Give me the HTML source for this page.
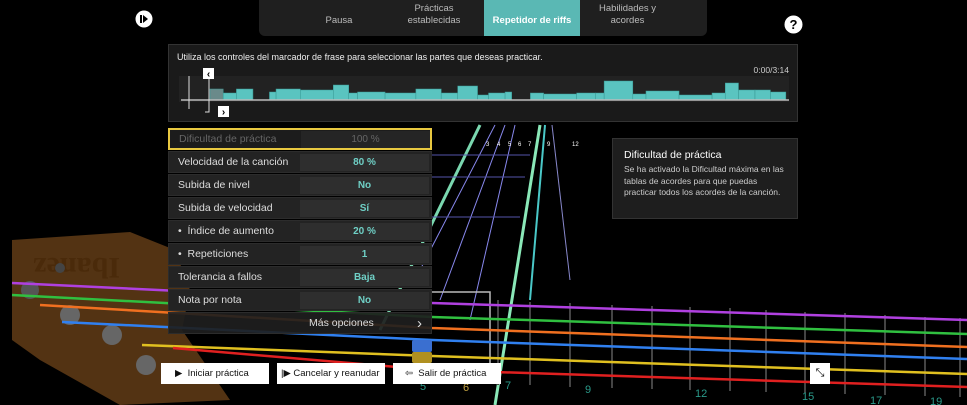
<!DOCTYPE html>
<html><head><meta charset="utf-8"><style>
*{margin:0;padding:0;box-sizing:border-box}
body{width:967px;height:405px;background:#000;overflow:hidden;position:relative;font-family:"Liberation Sans",sans-serif;color:#ddd}
.abs{position:absolute}
.tabs{left:259px;top:0;width:448px;height:36px;background:#1f1f1f;border-radius:0 0 6px 6px}
.tab{position:absolute;top:0;height:36px;font-size:9.5px;color:#bbb;text-align:center;display:flex;align-items:flex-end;justify-content:center;padding-bottom:9px;line-height:12px}
.panel{left:168px;top:44px;width:630px;height:78px;background:#1a1a1a;border:1px solid #333}
.row{position:absolute;left:168px;width:264px;height:22px;background:#232323;border:1px solid #2c2c2c}
.row .l{position:absolute;left:9px;top:0;line-height:21px;font-size:10.5px;color:#ddd}
.row .v{position:absolute;left:131px;top:2px;width:129px;height:17px;background:#2e2e2e;font-size:10px;color:#6fd0c6;text-align:center;line-height:17px;font-weight:bold}
.btn{position:absolute;top:363px;height:21px;background:#fff;color:#111;font-size:9.5px;line-height:21px;padding-left:14px}
</style></head><body>
<svg class="abs" style="left:0;top:0" width="967" height="405">
<!-- headstock -->
<path d="M12 240 L130 232 L175 250 L190 290 L182 330 L230 400 L120 405 L40 360 L12 340 Z" fill="#8a5520" opacity="0.6"/>
<text x="20" y="278" fill="#4a2a0a" font-family="Liberation Serif" font-size="30" font-weight="bold" transform="rotate(180 70 268)">Ibanez</text>
<circle cx="30" cy="290" r="9" fill="#555"/><circle cx="70" cy="315" r="10" fill="#666"/><circle cx="112" cy="335" r="10" fill="#666"/><circle cx="146" cy="365" r="10" fill="#666"/><circle cx="60" cy="268" r="5" fill="#444"/>
<!-- highway -->
<g stroke-width="1">
<line x1="480" y1="125" x2="380" y2="330" stroke="#7ad8b0" stroke-width="3"/>
<line x1="540" y1="125" x2="495" y2="405" stroke="#8ae8b8" stroke-width="3"/>
<line x1="545" y1="125" x2="530" y2="300" stroke="#4ac8c8" stroke-width="2"/>
<line x1="495" y1="125" x2="420" y2="270" stroke="#8888ee"/>
<line x1="505" y1="125" x2="440" y2="300" stroke="#8888ee"/>
<line x1="515" y1="125" x2="470" y2="320" stroke="#8888ee"/>
<line x1="552" y1="125" x2="570" y2="280" stroke="#8888cc"/>
<line x1="432" y1="155" x2="530" y2="155" stroke="#5555aa"/>
<line x1="432" y1="177" x2="525" y2="177" stroke="#5555aa"/>
<line x1="432" y1="217" x2="520" y2="217" stroke="#5555aa"/>
</g>
<g fill="#fff" font-size="6"><text x="486" y="146">3</text><text x="497" y="146">4</text><text x="508" y="146">5</text><text x="518" y="146">6</text><text x="528" y="146">7</text><text x="547" y="146">9</text><text x="572" y="146">12</text></g>
<!-- frets -->
<g stroke="#444" stroke-width="2">
<line x1="498" y1="300" x2="498" y2="385"/><line x1="530" y1="302" x2="530" y2="385"/><line x1="570" y1="303" x2="570" y2="387"/><line x1="612" y1="305" x2="612" y2="388"/><line x1="652" y1="306" x2="652" y2="389"/><line x1="690" y1="307" x2="690" y2="390"/><line x1="730" y1="308" x2="730" y2="391"/><line x1="766" y1="310" x2="766" y2="392"/><line x1="805" y1="312" x2="805" y2="393"/><line x1="845" y1="313" x2="845" y2="394"/><line x1="885" y1="315" x2="885" y2="395"/><line x1="925" y1="317" x2="925" y2="396"/><line x1="960" y1="318" x2="960" y2="397"/>
</g>
<polyline points="415,292 490,292 490,380" fill="none" stroke="#bbb" stroke-width="1.5"/>
<g stroke-width="2.5" fill="none">
<polyline points="12,283 432,303 967,320" stroke="#b040e0"/>
<polyline points="12,295 432,317 967,334" stroke="#30c040"/>
<polyline points="40,305 432,328 967,347" stroke="#f07020"/>
<polyline points="62,322 432,340 967,359" stroke="#3080f0"/>
<polyline points="142,345 432,356 967,374" stroke="#e0c020"/>
<polyline points="173,348 432,370 967,387" stroke="#e02020"/>
</g>
<rect x="412" y="340" width="20" height="12" fill="#3a6fd0" rx="2"/><rect x="412" y="352" width="20" height="11" fill="#b09020" rx="2"/>
<g font-size="11" fill="#2a9a8a"><text x="420" y="390">5</text><text x="463" y="391" fill="#c0a040">6</text><text x="505" y="389">7</text><text x="585" y="393">9</text><text x="695" y="397">12</text><text x="802" y="400">15</text><text x="870" y="404">17</text><text x="930" y="405">19</text></g>
</svg>

<div class="abs tabs">
<div class="tab" style="left:40px;width:80px">Pausa</div>
<div class="tab" style="left:125px;width:100px">Prácticas<br>establecidas</div>
<div class="tab" style="left:225px;width:96px;background:#5ab8b4;color:#fff;font-weight:bold">Repetidor de riffs</div>
<div class="tab" style="left:321px;width:95px">Habilidades y<br>acordes</div>
</div>
<svg class="abs" style="left:135px;top:10px" width="18" height="18"><circle cx="9" cy="9" r="8.5" fill="#fff"/><rect x="5" y="5" width="2" height="8" fill="#000"/><path d="M8 5 L13 9 L8 13Z" fill="#000"/></svg>
<svg class="abs" style="left:784px;top:15px" width="19" height="19"><circle cx="9.5" cy="9.5" r="9" fill="#fff"/><text x="9.5" y="14" text-anchor="middle" font-size="13" font-weight="bold" fill="#000" font-family="Liberation Sans">?</text></svg>

<div class="abs panel">
<div class="abs" style="left:8px;top:7px;font-size:9px;color:#eee">Utiliza los controles del marcador de frase para seleccionar las partes que deseas practicar.</div>
<div class="abs" style="right:8px;top:20px;font-size:8.5px;color:#ccc">0:00/3:14</div>
<div class="abs" style="left:10px;top:31px;width:610px;height:26px;background:#222"></div>
<svg class="abs" style="left:0;top:0" width="630" height="78">
<g transform="translate(41,-4) scale(1.101,1) translate(-19,0)">
<g fill="#5ac4c0" stroke="#3a9a96" stroke-width="0.5">
<rect x="19" y="48" width="12" height="11" fill="#6a8a8a"/><rect x="31" y="52" width="12" height="7"/><rect x="43" y="48" width="15" height="11"/><rect x="73" y="51" width="6" height="8"/><rect x="79" y="48" width="22" height="11"/><rect x="101" y="49" width="30" height="10"/><rect x="131" y="44" width="14" height="15"/><rect x="145" y="52" width="8" height="7"/><rect x="153" y="51" width="25" height="8"/><rect x="178" y="52" width="28" height="7"/><rect x="206" y="48" width="23" height="11"/><rect x="229" y="52" width="15" height="7"/><rect x="244" y="45" width="18" height="14"/><rect x="262" y="54" width="10" height="5"/><rect x="272" y="52" width="15" height="7"/><rect x="287" y="51" width="6" height="8"/><rect x="310" y="52" width="12" height="7"/><rect x="322" y="53" width="30" height="6"/><rect x="352" y="52" width="17" height="7"/><rect x="369" y="52" width="8" height="7"/><rect x="377" y="40" width="26" height="19"/><rect x="403" y="53" width="12" height="6"/><rect x="415" y="50" width="30" height="9"/><rect x="445" y="54" width="30" height="5"/><rect x="475" y="52" width="12" height="7"/><rect x="487" y="42" width="12" height="17"/><rect x="499" y="49" width="15" height="10"/><rect x="514" y="49" width="14" height="10"/><rect x="528" y="51" width="14" height="8"/>
</g>
</g>
<line x1="12" y1="55" x2="620" y2="55" stroke="#bbb" stroke-width="1.5"/>
<line x1="20" y1="31" x2="20" y2="64" stroke="#ddd"/>
<polyline points="36,30 40,30 40,67 36,67" fill="none" stroke="#ddd"/>
<rect x="34" y="23" width="11" height="11" fill="#fff"/><text x="39.5" y="32" text-anchor="middle" font-size="10" font-weight="bold" fill="#000">‹</text>
<rect x="49" y="61" width="11" height="11" fill="#fff"/><text x="54.5" y="70" text-anchor="middle" font-size="10" font-weight="bold" fill="#000">›</text>
</svg>
</div>

<div class="row" style="top:128px;border:2px solid #e8c840;background:#1c1c1c"><span class="l" style="color:#666;line-height:19px">Dificultad de práctica</span><span class="v" style="color:#666;font-weight:normal;background:#252525;top:1px">100 %</span></div>
<div class="row" style="top:151px"><span class="l">Velocidad de la canción</span><span class="v">80 %</span></div>
<div class="row" style="top:174px"><span class="l">Subida de nivel</span><span class="v">No</span></div>
<div class="row" style="top:197px"><span class="l">Subida de velocidad</span><span class="v">Sí</span></div>
<div class="row" style="top:220px"><span class="l">•&nbsp; Índice de aumento</span><span class="v">20 %</span></div>
<div class="row" style="top:243px"><span class="l">•&nbsp; Repeticiones</span><span class="v">1</span></div>
<div class="row" style="top:266px"><span class="l">Tolerancia a fallos</span><span class="v">Baja</span></div>
<div class="row" style="top:289px"><span class="l">Nota por nota</span><span class="v">No</span></div>
<div class="row" style="top:312px;background:rgba(30,30,30,.92)"><span class="l" style="left:140px">Más opciones</span><span class="l" style="left:248px;font-size:15px">›</span></div>

<div class="abs" style="left:612px;top:138px;width:186px;height:81px;background:#1e1e1e;border:1px solid #333;padding:10px 11px">
<div style="font-size:10.5px;color:#fff;margin-bottom:3px">Dificultad de práctica</div>
<div style="font-size:8.5px;color:#ccc;line-height:11.5px">Se ha activado la Dificultad máxima en las tablas de acordes para que puedas practicar todos los acordes de la canción.</div>
</div>

<div class="btn" style="left:161px;width:108px">▶&nbsp; Iniciar práctica</div>
<div class="btn" style="left:277px;width:108px;padding-left:4px">|▶ Cancelar y reanudar</div>
<div class="btn" style="left:393px;width:108px;padding-left:12px">⇦&nbsp; Salir de práctica</div>
<div class="abs" style="left:810px;top:363px;width:20px;height:21px;background:#fff;color:#000;font-size:11px;text-align:center;line-height:21px">⤡</div>
</body></html>
